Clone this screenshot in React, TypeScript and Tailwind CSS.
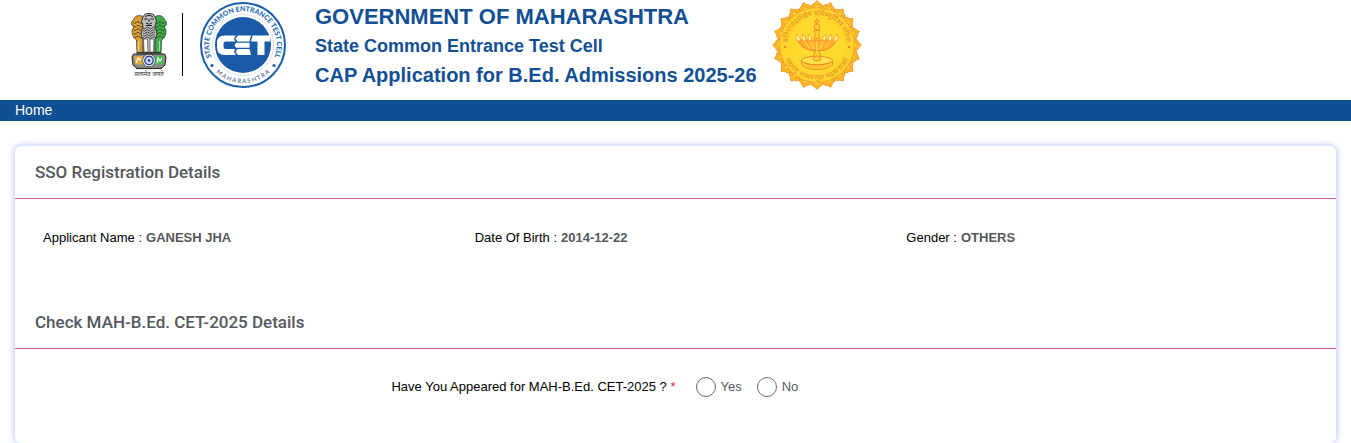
import { useState } from 'react';

const applicant = [
	{ label: 'Applicant Name', value: 'GANESH JHA' },
	{ label: 'Date Of Birth', value: '2014-12-22' },
	{ label: 'Gender', value: 'OTHERS' }
];

const petals = Array.from({ length: 20 }, (_, i) => i * 18);
const maneRows = [0, 1, 2, 3, 4];

function NationalEmblem() {
	return (
		<svg
			width="38"
			height="66"
			viewBox="0 0 38 66"
			className="shrink-0"
			role="img"
			aria-label="National emblem of India"
		>
			{/* side lions */}
			<path
				d="M11 3C7 2 4 3 3 6L.6 9 .8 12l2 1.500L1 18c0 5 2 7 4.500 9L6 39.500h6.500V6z"
				fill="#d9a033"
				stroke="#4a3a17"
				strokeWidth=".8"
			/>
			<path
				d="M25 3c4-1 7 0 8 3l2.400 3-.2 3-2 1.500L35 18c0 5-2 7-4.500 9L30 39.500h-6.500V6z"
				fill="#3fae4a"
				stroke="#17401f"
				strokeWidth=".8"
			/>
			{maneRows.map((row) => (
				<g key={row} fill="none" stroke="#33301f" strokeWidth=".8">
					<path d={`M2.500 ${9.5 + row * 3.6}q1.500 2 3 0t3 0t3 0`} />
					<path d={`M24.500 ${9.5 + row * 3.6}q1.500 2 3 0t3 0t3 0`} />
				</g>
			))}
			<path d="M7.500 28v10M28.500 28v10" stroke="#fff" strokeOpacity=".55" strokeWidth="1.200" />
			{/* centre lion */}
			<path
				d="M12 4c1-3 3-3.500 6-3.500S23 1 24 4l1.500 4L24 13l2 8-2 6v13H12V27l-2-6 2-8-1.500-5z"
				fill="#bdbdbd"
				stroke="#2a2a2a"
				strokeWidth=".9"
			/>
			<path
				d="M14 3.500q4-2.500 8 0M13 6h3.500M19.500 6H23M18 6v3M15 10q3 2.500 6 0M15 12.500h6"
				fill="none"
				stroke="#222"
				strokeWidth="1"
			/>
			{maneRows.map((row) => (
				<path
					key={row}
					d={`M12 ${15 + row * 2.4}q1.500 1.800 3 0t3 0t3 0t3 0`}
					fill="none"
					stroke="#333"
					strokeWidth=".9"
				/>
			))}
			<path d="M12.500 26h4l.5 13h-4zM19 26h4l-.5 13H19z" fill="#fafafa" stroke="#333" strokeWidth=".6" />
			<path d="M5.500 40h25" stroke="#222" strokeWidth="1.200" />
			{/* abacus with the wheel */}
			<path d="M2.500 41h31l1.500 3-1 8-4 3.500H6L2 52l-1-8z" fill="#8a8a82" stroke="#222" />
			<path d="M3 43h9v8.500H4.500z" fill="#e0a93c" />
			<path d="M24 43h9l-1.500 8.500H24z" fill="#4dba58" />
			<path d="M5 50l2-5 2 2 1-2M26 50l1-5 2 3 2-3" fill="none" stroke="#fff" strokeWidth="1.100" />
			<circle cx="18" cy="47.500" r="6.300" fill="#fff" stroke="#222" strokeWidth=".6" />
			<circle cx="18" cy="47.500" r="4.200" fill="#d5dbf6" stroke="#2b3fa4" strokeWidth="1.400" />
			<circle cx="18" cy="47.500" r="1.300" fill="#20307f" />
			<path d="M5 55.500h26" stroke="#333" strokeWidth="1.200" />
			<text
				x="18"
				y="63"
				textAnchor="middle"
				fontSize="6"
				fill="#333"
				fontFamily="'Noto Sans', sans-serif"
			>
				सत्यमेव जयते
			</text>
		</svg>
	);
}

function CetLogo() {
	return (
		<svg
			width="88"
			height="88"
			viewBox="0 0 88 88"
			className="shrink-0"
			role="img"
			aria-label="State Common Entrance Test Cell, Maharashtra"
		>
			<defs>
				<path id="cet-top" d="M14.400 60.400A33.800 33.800 0 1 1 73.600 60.400" />
				<path id="cet-bottom" d="M8.200 57.500A38.300 38.300 0 0 0 79.800 57.500" />
			</defs>
			<circle cx="44" cy="44" r="42" fill="#fff" stroke="#1c5ea8" strokeWidth="2" />
			<circle cx="44" cy="44" r="30.500" fill="none" stroke="#a9b7c8" strokeWidth=".8" strokeDasharray="1 1" />
			<circle cx="44" cy="44" r="28" fill="#1a5aa6" />
			<text fontFamily="Lato, sans-serif" fontSize="7" fontWeight="900" fill="#1b6cb8">
				<textPath href="#cet-top" startOffset="50%" textAnchor="middle">
					STATE COMMON ENTRANCE TEST CELL
				</textPath>
			</text>
			<text fontFamily="Lato, sans-serif" fontSize="6" fontWeight="700" fill="#67809d">
				<textPath href="#cet-bottom" startOffset="50%" textAnchor="middle">
					M A H A R A S H T R A
				</textPath>
			</text>
			<circle cx="13" cy="64.500" r="1.600" fill="#1c5ea8" />
			<circle cx="75" cy="64.500" r="1.600" fill="#1c5ea8" />
			{/* interlocking monogram bars */}
			<g fill="#fff">
				<path d="M37 34.500H25.500q-7.500 0-7.500 7.500v4.500q0 7.500 7.500 7.500H37l-2-3 1-3H27q-2.500 0-2.500-2.500v-2.500q0-2.500 2.500-2.500h9l-1-3z" />
				<path d="M39 34.500h13l-1.500 6H38.500l-2-3zM37 41.700h13.500v5H37l-1.500-2.500zM38.500 48h12l1.500 6H39l-2.500-3z" />
				<path d="M53.500 34.500H71v6h-5.500V54h-7V40.500h-6.500z" />
			</g>
		</svg>
	);
}

function StateSeal() {
	return (
		<svg
			width="90"
			height="90"
			viewBox="0 0 90 90"
			className="shrink-0"
			role="img"
			aria-label="Seal of Maharashtra"
		>
			<defs>
				<path id="seal-top" d="M16.200 51.800A29.600 29.600 0 1 1 73.800 51.800" />
				<path id="seal-bottom" d="M10.800 52.200A35 35 0 0 0 79.200 52.200" />
			</defs>
			{petals.map((angle) => (
				<g key={angle} transform={`rotate(${angle} 45 45)`}>
					<path
						d="M38 8.500Q39 4 42.500 3.200L45 .5l2.500 2.700Q51 4 52 8.500L50 13H40z"
						fill="#fbb822"
						stroke="#ee9a35"
						strokeWidth=".9"
					/>
					<path
						d="M42.500 6.500Q45 3.500 47.500 6.500L46 9h-2z"
						fill="#ffe341"
						stroke="#ed8f2f"
						strokeWidth=".6"
					/>
				</g>
			))}
			<circle cx="45" cy="45" r="37.500" fill="#ffd52b" stroke="#f2a82b" strokeWidth="1.200" />
			<circle cx="45" cy="45" r="27" fill="#ffda2e" />
			<g fontFamily="'Noto Sans', sans-serif" fontSize="7" fill="#e58b29">
				<text>
					<textPath href="#seal-top" startOffset="50%" textAnchor="middle">
						प्रतिपच्चंद्रलेखेव वर्धिष्णुर्विश्व वंदिता
					</textPath>
				</text>
				<text>
					<textPath href="#seal-bottom" startOffset="50%" textAnchor="middle">
						महाराष्ट्र शासन मुद्रा भद्राय राजते
					</textPath>
				</text>
			</g>
			<circle cx="13" cy="47" r="1.200" fill="#e58b29" />
			<circle cx="77" cy="47" r="1.200" fill="#e58b29" />
			{/* oil lamp */}
			<g fill="#ffd22b" stroke="#e98a2c" strokeWidth=".9">
				<path d="M45 19c-2.500 2-2.500 4 0 5 2.500-1 2.500-3 0-5z" fill="#ffb32a" />
				<circle cx="45" cy="27" r="2.800" />
				<path d="M42 30.500h6l-1.500 4 1.500 4h-6l1.500-4z" />
				<path d="M26 40h38q-2 8-13 10.500H39Q28 48 26 40z" fill="#ffad2b" />
				<path d="M43 50.500h4l1 5q5 1 6 4H36q1-3 6-4z" />
				<ellipse cx="45" cy="60.500" rx="15.500" ry="4.200" fill="#ffe04a" />
				<path d="M29.500 60.500v4q3 5 15.500 5t15.500-5v-4Q58 65 45 65t-15.500-4.500z" fill="#ffc928" />
				<path d="M41 60q1-4 4-4t4 4q-4 2-8 0z" />
			</g>
			<path
				d="M25 41q-2-4 0-7 3 4 4 7zM31 41q-2-4 0-7 3 3 3 7zM37 41q-2-4 0-7 3 3 2 7zM53 41q2-4 0-7-3 3-2 7zM59 41q2-4 0-7-3 3-3 7zM65 41q2-4 0-7-3 4-4 7z"
				fill="#fff3a0"
				stroke="#ef8d2d"
				strokeWidth=".7"
			/>
			<path d="M33 42l4 6M39 42l3 7M45 41v11M51 42l-3 7M57 42l-4 6" stroke="#f7e253" strokeWidth="1" />
		</svg>
	);
}

function SectionTitle({ children }: { children: string }) {
	return (
		<h2 className="border-b border-[#cf5f7c] px-5 py-3.5 font-[Roboto,sans-serif] text-[17px] leading-6 font-medium text-[#55585c]">
			{children}
		</h2>
	);
}

export default function App() {
	const [appeared, setAppeared] = useState('');

	return (
		<div className="bg-white font-['Liberation_Sans',Arial,sans-serif] text-[13px] leading-5 text-black">
			<header className="flex h-25 items-start pl-[131px] text-[#124f93]">
				<div className="mt-[13px] flex">
					<NationalEmblem />
					<div className="ml-[13px] h-[63px] w-px bg-black" />
				</div>
				<div className="ml-4 pt-px">
					<CetLogo />
				</div>
				<div className="ml-7 pt-[3px] font-bold">
					<h1 className="text-[22px] leading-7">GOVERNMENT OF MAHARASHTRA</h1>
					<p className="text-lg leading-[30px]">State Common Entrance Test Cell</p>
					<p className="text-xl leading-7">CAP Application for B.Ed. Admissions 2025-26</p>
				</div>
				<div className="ml-[15px]">
					<StateSeal />
				</div>
			</header>

			<nav className="bg-[#0f4f93] px-[15px] pb-px text-sm text-white">
				<a href="#home" className="block">
					Home
				</a>
			</nav>

			<main className="px-[15px] pt-[25px]">
				<div className="rounded-md bg-white pb-[46px] shadow-[0_0_6px_1px_#bcc6fb]">
					<section>
						<SectionTitle>SSO Registration Details</SectionTitle>
						<dl className="grid grid-cols-3 px-[13px] pt-[29px] pb-12">
							{applicant.map(({ label, value }) => (
								<div key={label} className="flex gap-1 px-[15px]">
									<dt>{label} :</dt>
									<dd className="font-bold text-[#55585c]">{value}</dd>
								</div>
							))}
						</dl>
					</section>

					<section>
						<SectionTitle>Check MAH-B.Ed. CET-2025 Details</SectionTitle>
						<div
							role="radiogroup"
							aria-labelledby="appeared-label"
							className="grid grid-cols-2 items-center pt-7"
						>
							<div id="appeared-label" className="text-right">
								Have You Appeared for MAH-B.Ed. CET-2025 ? <span className="text-[#e02b2b]">*</span>
							</div>
							<div className="flex gap-[15px] pl-5 text-[#55585c]">
								{['Yes', 'No'].map((option) => (
									<label key={option} className="flex items-center gap-[5px]">
										<input
											type="radio"
											name="appeared"
											value={option}
											checked={appeared === option}
											onChange={() => setAppeared(option)}
											className="size-5 appearance-none rounded-full border border-[#6b6b6b] checked:border-[6px] checked:border-[#0f4f93]"
										/>
										{option}
									</label>
								))}
							</div>
						</div>
					</section>
				</div>
			</main>
		</div>
	);
}
